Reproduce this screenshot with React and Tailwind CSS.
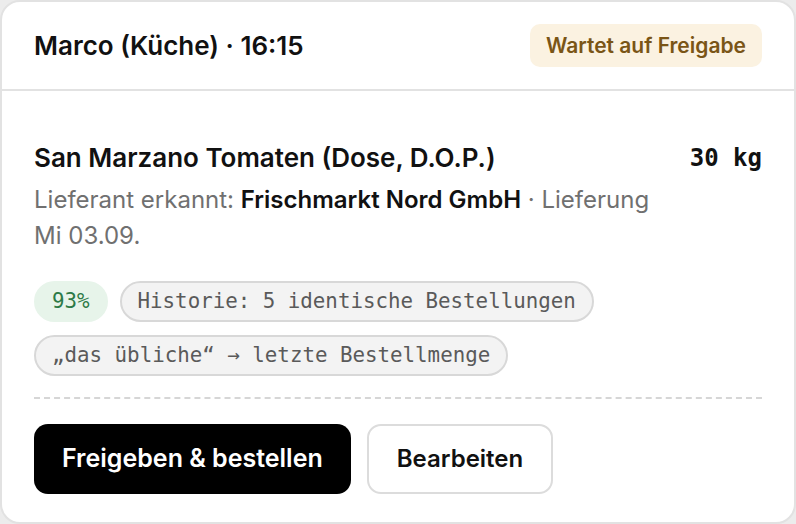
import React from 'react';

const mono = { fontFamily: '"DejaVu Sans Mono", "Liberation Mono", monospace' };

const Chip = ({ children, tone = 'gray' }) => {
  const cls =
    tone === 'green'
      ? 'bg-[#e7f4ea] text-[#2d7a47] border-[#e7f4ea]'
      : 'bg-[#f3f3f3] text-[#5a5a5a] border-[#d8d8d8]';
  return (
    <span
      className={`inline-flex items-center h-[41px] px-[16px] rounded-full border-2 text-[20.8px] ${cls}`}
      style={mono}
    >
      {children}
    </span>
  );
};

export default function App() {
  return (
    <div className="bg-[#ececec] w-[796px] h-[524px] font-['Inter',sans-serif]">
      <div className="bg-white w-full h-full rounded-[20px] border-2 border-[#e2e2e2] flex flex-col">
        {/* header */}
        <div className="flex items-center justify-between h-[89px] px-[32px] border-b-2 border-[#e2e2e2]">
          <div className="text-[26px] font-semibold text-[#111]">Marco (Küche) · 16:15</div>
          <span className="bg-[#fbf2e1] text-[#7a5516] text-[21px] font-semibold rounded-[10px] px-[16px] py-[6px]">
            Wartet auf Freigabe
          </span>
        </div>

        {/* body */}
        <div className="px-[32px] pt-[51px]">
          <div className="flex items-start justify-between gap-6">
            <div className="max-w-[630px]">
              <div className="text-[26px] font-semibold text-[#111] leading-[32px]">
                San Marzano Tomaten (Dose, D.O.P.)
              </div>
              <div className="text-[24px] text-[#707070] leading-[36px] mt-[8px]">
                Lieferant erkannt: <span className="font-semibold text-[#111]">Frischmarkt Nord GmbH</span> · Lieferung Mi 03.09.
              </div>
            </div>
            <div className="text-[24px] font-bold text-[#111] leading-[32px]" style={mono}>30 kg</div>
          </div>

          <div className="flex flex-wrap gap-x-[12px] gap-y-[13px] mt-[27px]">
            <Chip tone="green">93%</Chip>
            <Chip>Historie: 5 identische Bestellungen</Chip>
            <Chip>„das übliche“ → letzte Bestellmenge</Chip>
          </div>

          <div className="border-t-2 border-dashed border-[#d6d6d6] mt-[21px]" />

          <div className="flex gap-[16px] mt-[25px]">
            <button className="h-[70px] px-[28px] bg-black text-white rounded-[14px] text-[25px] font-semibold">
              Freigeben &amp; bestellen
            </button>
            <button className="h-[70px] px-[28px] bg-white text-[#111] rounded-[14px] border-2 border-[#dcdcdc] text-[24px] font-semibold">
              Bearbeiten
            </button>
          </div>
        </div>
      </div>
    </div>
  );
}
